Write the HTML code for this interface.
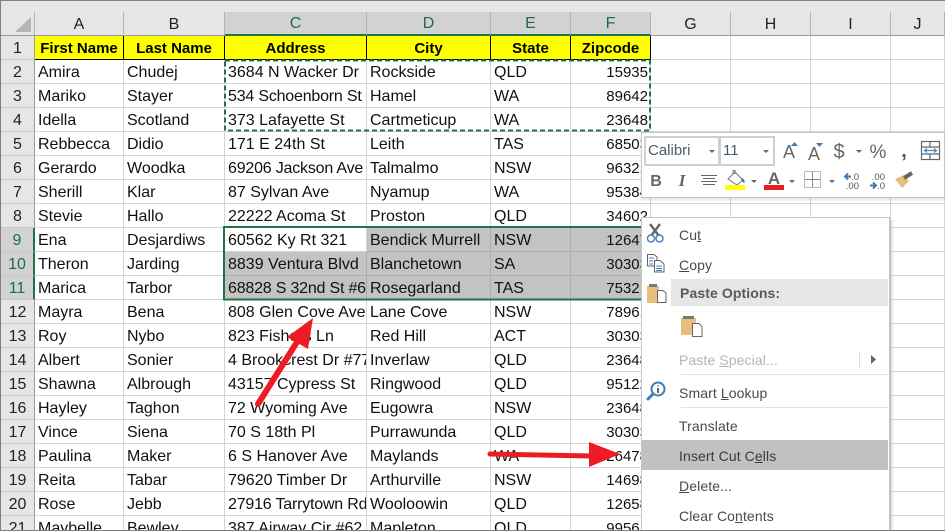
<!DOCTYPE html>
<html><head><meta charset="utf-8"><style>
html,body{margin:0;padding:0;overflow:hidden;width:945px;height:531px}
#wrap{position:absolute;left:0;top:0;width:945px;height:531px;overflow:hidden;background:#fff;font-family:"Liberation Sans",sans-serif;color:#111}
#top{position:absolute;left:0;top:0;width:945px;height:12px;background:#e6e6e6;border-top:1px solid #808080;box-sizing:border-box}
table{position:absolute;left:1px;top:12px;border-collapse:separate;border-spacing:0;table-layout:fixed;width:944px}
td{height:24px;box-sizing:border-box;padding:2px 3px 0;border-right:1px solid #d4d4d4;border-bottom:1px solid #d4d4d4;overflow:hidden;white-space:nowrap;font-size:16px;line-height:21px;color:#111}
td.h{background:#e6e6e6;text-align:center;border-right:1px solid #ababab;border-bottom:1px solid #ababab;padding:2px 0 0;color:#222}
tr:first-child td{border-bottom:1px solid #9a9a9a;border-right:1px solid #b4b4b4}
tr:first-child td.s{background:#d2d2d2;color:#1f6b4b;border-bottom:2px solid #217346;line-height:20px}
td.r{background:#e6e6e6;border-right:1px solid #9a9a9a;border-bottom:1px solid #c8c8c8;text-align:center;padding:2px 0 0;color:#222}
td.rs{background:#d2d2d2;color:#1f6b4b;border-right:2px solid #217346}
tr.y td:not(.r):not(.w){background:#ff0;font-weight:bold;font-size:15px;text-align:center;border-right:1px solid #000;border-bottom:1px solid #000;color:#000;padding:2px 0 0;line-height:21px}
td.g{background:#c3c3c3;border-right:1px solid #adadad;border-bottom:1px solid #adadad}
td.n{text-align:right;padding-right:2px;font-size:15px}
td.t{letter-spacing:-.2px}
svg{position:absolute;left:0;top:0}
#menu{position:absolute;left:641px;top:217px;width:249px;height:320px;box-sizing:border-box;background:#fff;border:1px solid #c6c6c6;box-shadow:3px 2px 2px rgba(0,0,0,.1)}
#tb{position:absolute;left:641px;top:132px;width:304px;height:66px;box-sizing:border-box;background:#fff;border:1px solid #c6c6c6;box-shadow:0 2px 2px rgba(0,0,0,.1)}
.mi{position:absolute;left:679px;line-height:20px;font-size:14px;color:#4a4a4a;letter-spacing:.1px;white-space:nowrap}
.band{position:absolute}
.cb{position:absolute;top:136px;height:30px;box-sizing:border-box;border:2px solid #cfcfcf;font-size:15px;color:#4c5a6b;line-height:26px;padding-left:2px}
#bot{position:absolute;left:0;top:530px;width:945px;height:1px;background:#808080}
#lft{position:absolute;left:0;top:0;width:1px;height:531px;background:#808080}
</style></head><body><div id="wrap">
<div id="top"></div>
<table><colgroup><col style="width:34px"><col style="width:89px"><col style="width:101px"><col style="width:142px"><col style="width:124px"><col style="width:80px"><col style="width:80px"><col style="width:80px"><col style="width:80px"><col style="width:80px"><col style="width:54px"></colgroup>
<tr><td class="h"></td><td class="h">A</td><td class="h">B</td><td class="h s">C</td><td class="h s">D</td><td class="h s">E</td><td class="h s">F</td><td class="h">G</td><td class="h">H</td><td class="h">I</td><td class="h">J</td></tr>
<tr class="y"><td class="r">1</td><td>First Name</td><td>Last Name</td><td>Address</td><td>City</td><td>State</td><td>Zipcode</td><td class="w"></td><td class="w"></td><td class="w"></td><td class="w"></td></tr>
<tr><td class="r">2</td><td>Amira</td><td>Chudej</td><td>3684 N Wacker Dr</td><td>Rockside</td><td>QLD</td><td class="n">15935</td><td></td><td></td><td></td><td></td></tr>
<tr><td class="r">3</td><td>Mariko</td><td>Stayer</td><td class="t">534 Schoenborn St</td><td>Hamel</td><td>WA</td><td class="n">89642</td><td></td><td></td><td></td><td></td></tr>
<tr><td class="r">4</td><td>Idella</td><td>Scotland</td><td>373 Lafayette St</td><td>Cartmeticup</td><td>WA</td><td class="n">23648</td><td></td><td></td><td></td><td></td></tr>
<tr><td class="r">5</td><td>Rebbecca</td><td>Didio</td><td>171 E 24th St</td><td>Leith</td><td>TAS</td><td class="n">68503</td><td></td><td></td><td></td><td></td></tr>
<tr><td class="r">6</td><td>Gerardo</td><td>Woodka</td><td class="t">69206 Jackson Ave</td><td>Talmalmo</td><td>NSW</td><td class="n">96321</td><td></td><td></td><td></td><td></td></tr>
<tr><td class="r">7</td><td>Sherill</td><td>Klar</td><td>87 Sylvan Ave</td><td>Nyamup</td><td>WA</td><td class="n">95384</td><td></td><td></td><td></td><td></td></tr>
<tr><td class="r">8</td><td>Stevie</td><td>Hallo</td><td>22222 Acoma St</td><td>Proston</td><td>QLD</td><td class="n">34602</td><td></td><td></td><td></td><td></td></tr>
<tr><td class="r rs">9</td><td>Ena</td><td>Desjardiws</td><td>60562 Ky Rt 321</td><td class="g">Bendick Murrell</td><td class="g">NSW</td><td class="g n">12647</td><td></td><td></td><td></td><td></td></tr>
<tr><td class="r rs">10</td><td>Theron</td><td>Jarding</td><td class="g">8839 Ventura Blvd</td><td class="g">Blanchetown</td><td class="g">SA</td><td class="g n">30303</td><td></td><td></td><td></td><td></td></tr>
<tr><td class="r rs">11</td><td>Marica</td><td>Tarbor</td><td class="g t">68828 S 32nd St #6</td><td class="g">Rosegarland</td><td class="g">TAS</td><td class="g n">75321</td><td></td><td></td><td></td><td></td></tr>
<tr><td class="r">12</td><td>Mayra</td><td>Bena</td><td>808 Glen Cove Ave</td><td>Lane Cove</td><td>NSW</td><td class="n">78961</td><td></td><td></td><td></td><td></td></tr>
<tr><td class="r">13</td><td>Roy</td><td>Nybo</td><td>823 Fishers Ln</td><td>Red Hill</td><td>ACT</td><td class="n">30303</td><td></td><td></td><td></td><td></td></tr>
<tr><td class="r">14</td><td>Albert</td><td>Sonier</td><td>4 Brookcrest Dr #7786</td><td>Inverlaw</td><td>QLD</td><td class="n">23648</td><td></td><td></td><td></td><td></td></tr>
<tr><td class="r">15</td><td>Shawna</td><td>Albrough</td><td>43157 Cypress St</td><td>Ringwood</td><td>QLD</td><td class="n">95122</td><td></td><td></td><td></td><td></td></tr>
<tr><td class="r">16</td><td>Hayley</td><td>Taghon</td><td>72 Wyoming Ave</td><td>Eugowra</td><td>NSW</td><td class="n">23648</td><td></td><td></td><td></td><td></td></tr>
<tr><td class="r">17</td><td>Vince</td><td>Siena</td><td>70 S 18th Pl</td><td>Purrawunda</td><td>QLD</td><td class="n">30303</td><td></td><td></td><td></td><td></td></tr>
<tr><td class="r">18</td><td>Paulina</td><td>Maker</td><td>6 S Hanover Ave</td><td>Maylands</td><td>WA</td><td class="n">26478</td><td></td><td></td><td></td><td></td></tr>
<tr><td class="r">19</td><td>Reita</td><td>Tabar</td><td>79620 Timber Dr</td><td>Arthurville</td><td>NSW</td><td class="n">14698</td><td></td><td></td><td></td><td></td></tr>
<tr><td class="r">20</td><td>Rose</td><td>Jebb</td><td class="t">27916 Tarrytown Rd</td><td>Wooloowin</td><td>QLD</td><td class="n">12658</td><td></td><td></td><td></td><td></td></tr>
<tr><td class="r">21</td><td>Maybelle</td><td>Bewley</td><td>387 Airway Cir #62</td><td>Mapleton</td><td>QLD</td><td class="n">99561</td><td></td><td></td><td></td><td></td></tr>
</table>
<svg width="945" height="531">
<polygon points="31,17 31,32 15,32" fill="#b5b5b5"/>
<rect x="225" y="60.5" width="425" height="70" fill="none" stroke="#217346" stroke-width="2" stroke-dasharray="5 3"/>
<rect x="224" y="227" width="426.5" height="72.5" fill="none" stroke="#217346" stroke-width="2"/>
</svg>
<div id="tb"></div>
<div class="cb" style="left:644px;width:76px">Calibri</div>
<div class="cb" style="left:719px;width:56px">11</div>
<div id="menu"></div>
<div class="band" style="left:671px;top:279px;width:217px;height:27px;background:#e6e6e6"></div>
<div class="band" style="left:642px;top:440px;width:246px;height:30px;background:#c1c1c1"></div>
<div class="band" style="left:681px;top:374px;width:207px;height:1px;background:#e2e2e2"></div>
<div class="band" style="left:681px;top:407px;width:207px;height:1px;background:#e2e2e2"></div>
<div class="band" style="left:859px;top:351px;width:1px;height:17px;background:#e0e0e0"></div>
<div class="mi" style="top:225px">Cu<u>t</u></div>
<div class="mi" style="top:255px"><u>C</u>opy</div>
<div class="mi" style="top:283px;left:680px;font-weight:bold;color:#595959">Paste Options:</div>
<div class="mi" style="top:350px;color:#b4b4b4">Paste <u>S</u>pecial...</div>
<div class="mi" style="top:383px">Smart <u>L</u>ookup</div>
<div class="mi" style="top:416px">Translate</div>
<div class="mi" style="top:446px;color:#3a3a3a">Insert Cut C<u>e</u>lls</div>
<div class="mi" style="top:476px"><u>D</u>elete...</div>
<div class="mi" style="top:506px">Clear Co<u>n</u>tents</div>
<svg width="945" height="531" font-family="Liberation Sans, sans-serif">
<g fill="#666">
<polygon points="709,150 715,150 712,153"/>
<polygon points="763,150 769,150 766,153"/>
<polygon points="856,150 862,150 859,153"/>
<polygon points="751,180 757,180 754,183"/>
<polygon points="789,180 795,180 792,183"/>
<polygon points="829,180 835,180 832,183"/>
</g>
<text x="783" y="158" font-size="18" fill="#666">A</text>
<polygon points="791,146 798,146 794.500,142" fill="#3f7cb5"/>
<text x="808" y="160" font-size="18" fill="#666">A</text>
<polygon points="816,143 823,143 819.500,147" fill="#3f7cb5"/>
<text x="839" y="158" font-size="20" fill="#666" text-anchor="middle">$</text>
<text x="878" y="158" font-size="19" fill="#666" text-anchor="middle">%</text>
<text x="904" y="157" font-size="20" font-weight="bold" fill="#555" text-anchor="middle">,</text>
<g fill="none" stroke="#666" stroke-width="1.200">
<rect x="921.500" y="141.500" width="18" height="18"/>
<path d="M922 147H939M922 154H939M930 142V147M930 154V159"/>
</g>
<rect x="923" y="148" width="15" height="5" fill="#fff"/>
<path d="M925 150.500H936M927 148.500L924.500 150.500L927 152.500M934 148.500L936.500 150.500L934 152.500" fill="none" stroke="#3f8cc9" stroke-width="1.200"/>
<text x="656" y="186" font-size="16" font-weight="bold" fill="#666" text-anchor="middle">B</text>
<text x="682" y="186" font-size="17" font-weight="bold" font-style="italic" font-family="Liberation Serif, serif" fill="#666" text-anchor="middle">I</text>
<path d="M701 175.500H717M703 178.500H715M701 181.500H717M703 184.500H715" stroke="#666" stroke-width="1"/>
<path d="M728 179L735 172L743 180L737 185Z" fill="#fff" stroke="#777" stroke-width="1"/>
<path d="M733 174V170.500H735V174" fill="none" stroke="#777"/>
<path d="M742 178Q745 179 744.500 183Q742 182 741 180Z" fill="#3f7cb5"/>
<rect x="725" y="185" width="20" height="5" fill="#ff0"/>
<text x="774" y="184" font-size="17" font-weight="bold" fill="#666" text-anchor="middle">A</text>
<rect x="764" y="185" width="20" height="5" fill="#ed1c24"/>
<rect x="804.500" y="171.500" width="16" height="16" fill="none" stroke="#777" stroke-width="1" stroke-dasharray="1 1"/>
<path d="M812.500 172V187M805 179.500H820" stroke="#888" stroke-width="1"/>
<text x="859" y="180" font-size="9.500" fill="#555" text-anchor="end">.0</text>
<text x="859" y="189" font-size="9.500" fill="#555" text-anchor="end">.00</text>
<path d="M845 176.500H851M848 173.500L845 176.500L848 179.500" fill="none" stroke="#3f7cb5" stroke-width="2"/>
<text x="885" y="180" font-size="9.500" fill="#555" text-anchor="end">.00</text>
<text x="885" y="189" font-size="9.500" fill="#555" text-anchor="end">.0</text>
<path d="M870 185.500H876M873 182.500L876 185.500L873 188.500" fill="none" stroke="#3f7cb5" stroke-width="2"/>
<polygon points="895,179 904,175 909,181 902,188" fill="#e8bd7e"/>
<path d="M904 178L912 173" stroke="#666" stroke-width="4"/>
<path d="M650 224L659 236M660 224L651 236" stroke="#666" stroke-width="2.400" fill="none"/>
<circle cx="651" cy="238.500" r="3.500" fill="#fff" stroke="#4a7ebb" stroke-width="1.500"/>
<circle cx="659.500" cy="238.500" r="3.500" fill="#fff" stroke="#4a7ebb" stroke-width="1.500"/>
<path d="M647.500 254.500H654L657 257V266H647.500Z" fill="#fff" stroke="#666"/>
<path d="M654.500 260.500H660L664 264V272H654.500Z" fill="#fff" stroke="#666"/>
<path d="M649 258H654M649 261H653M649 264H653M656 266H662M656 268.500H662M656 270.500H662" stroke="#4a7ebb" stroke-width="1"/>
<rect x="647" y="286" width="12" height="17" fill="#e8bd7e"/>
<rect x="649" y="284" width="8" height="3" fill="#777"/>
<path d="M657.500 290.500H663L666 293V302.500H657.500Z" fill="#fff" stroke="#666"/>
<rect x="681" y="318" width="15" height="17" fill="#e8bd7e"/>
<rect x="683" y="316" width="11" height="3" fill="#777"/>
<path d="M692.500 323.500H699L702 326.500V336.500H692.500Z" fill="#fff" stroke="#666"/>
<polygon points="871,355 876,359.500 871,364" fill="#666"/>
<circle cx="658" cy="389" r="6.500" fill="#fff" stroke="#3f7cb5" stroke-width="2"/>
<path d="M653 394L648 399" stroke="#3f7cb5" stroke-width="3" stroke-linecap="round"/>
<path d="M658 385.500V386.500M658 388V393" stroke="#666" stroke-width="2"/>
<path d="M258 404L297 342" stroke="#ed1c24" stroke-width="6" stroke-linecap="round"/>
<polygon points="313,318 308,349 287,337" fill="#ed1c24"/>
<path d="M490 454L592 456" stroke="#ed1c24" stroke-width="5" stroke-linecap="round"/>
<polygon points="589,442 620,454 589,467" fill="#ed1c24"/>
</svg>
<div id="lft"></div><div id="bot"></div>
</div></body></html>
